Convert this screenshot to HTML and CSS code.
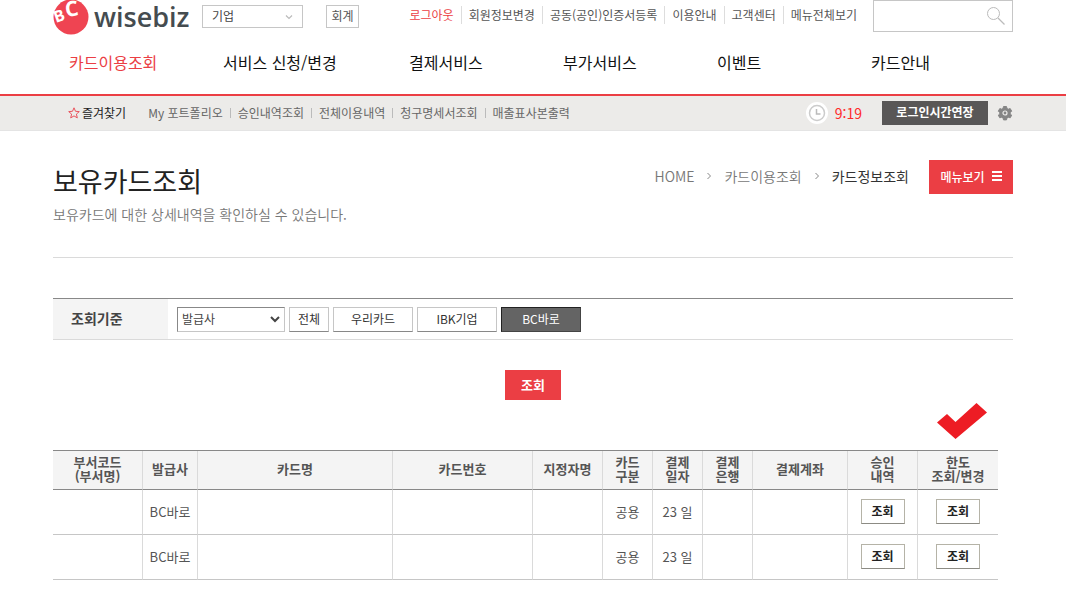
FILE: index.html
```html
<!DOCTYPE html>
<html lang="ko">
<head>
<meta charset="utf-8">
<meta name="viewport" content="width=device-width, initial-scale=1">
<title>보유카드조회 - wisebiz</title>
<link rel="stylesheet" href="styles.css">
</head>
<body>
<header class="header">
  <div class="container top">
    <a class="logo" href="#">
      <svg class="logo-mark" viewBox="0 0 36 36" aria-hidden="true">
        <circle cx="18" cy="18" r="17.500" fill="#ef4452"/>
        <text class="logo-b" transform="translate(3 24) rotate(-20)">B</text>
        <text class="logo-c" transform="translate(13 18) rotate(-8)">C</text>
      </svg>
      <span class="logo-text">wisebiz</span>
    </a>
    <div class="select-box member">
      <select class="select" aria-label="회원 구분"><option>기업</option></select>
      <svg class="arrow" viewBox="0 0 10 10" aria-hidden="true"><path d="M2 3.500l3 3l3-3" fill="none" stroke="#bbb" stroke-width="1.200"/></svg>
    </div>
    <button class="account" type="button">회계</button>
    <nav class="util" aria-label="회원 메뉴">
      <a class="on" href="#">로그아웃</a><a href="#">회원정보변경</a><a href="#">공동(공인)인증서등록</a><a href="#">이용안내</a><a href="#">고객센터</a><a href="#">메뉴전체보기</a>
    </nav>
    <form class="search">
      <input class="search-input" type="text" aria-label="검색">
      <button class="search-btn" type="button" aria-label="검색하기">
        <svg viewBox="0 0 20 20" aria-hidden="true"><circle cx="7.500" cy="7.500" r="6" fill="none" stroke="#bbb"/><path d="M12 12l6.500 6.500" stroke="#bbb" stroke-width="1.300"/></svg>
      </button>
    </form>
  </div>
  <nav class="container gnb" aria-label="주 메뉴">
    <a class="on" href="#">카드이용조회</a><a href="#">서비스 신청/변경</a><a href="#">결제서비스</a><a href="#">부가서비스</a><a href="#">이벤트</a><a href="#">카드안내</a>
  </nav>
</header>
<div class="quick">
  <div class="container quick-in">
    <a class="fav" href="#">
      <svg class="star" viewBox="0 0 12 12" aria-hidden="true"><path d="M6 .8l1.500 3.500 3.800.3-2.900 2.500.9 3.800L6 8.900l-3.300 2 .9-3.800L.7 4.600l3.800-.3z" fill="none" stroke="#e9535d"/></svg>
      즐겨찾기
    </a>
    <nav class="quick-links" aria-label="바로가기">
      <a href="#">My 포트폴리오</a><a href="#">승인내역조회</a><a href="#">전체이용내역</a><a href="#">청구명세서조회</a><a href="#">매출표사본출력</a>
    </nav>
    <div class="session">
      <svg class="clock" viewBox="0 0 22 22" aria-hidden="true"><circle cx="11" cy="11" r="11" fill="#fff"/><circle cx="11" cy="11" r="7.500" fill="none" stroke="#ccc" stroke-width="1.500"/><path d="M10.500 7v5h4" fill="none" stroke="#bbb" stroke-width="1.500"/></svg>
      <span class="time">9:19</span>
      <button class="extend" type="button">로그인시간연장</button>
      <button class="gear" type="button" aria-label="설정">
        <svg viewBox="0 0 16 16" aria-hidden="true"><path fill="#858585" stroke="#858585" stroke-linejoin="round" d="M6.500 1.500h3l.5 2 1.200.7 2-.6 1.500 2.600-1.500 1.300v1.400l1.500 1.300-1.500 2.600-2-.6-1.200.7-.5 2h-3l-.5-2-1.200-.7-2 .6-1.500-2.600 1.500-1.300V7.500L1.300 6.200l1.500-2.600 2 .6L6 3.500z"/><circle cx="8" cy="8" r="2" fill="none" stroke="#ecebe9" stroke-width="1.200"/></svg>
      </button>
    </div>
  </div>
</div>
<main class="container">
  <div class="page-head">
    <div>
      <h1 class="title">보유카드조회</h1>
      <p class="desc">보유카드에 대한 상세내역을 확인하실 수 있습니다.</p>
    </div>
    <div class="location">
      <nav class="crumbs" aria-label="현재 위치">
        <a href="#">HOME</a>
        <svg class="sep" viewBox="0 0 6 8" aria-hidden="true"><path d="M1.500 1l3 3-3 3" fill="none" stroke="#888"/></svg>
        <a href="#">카드이용조회</a>
        <svg class="sep" viewBox="0 0 6 8" aria-hidden="true"><path d="M1.500 1l3 3-3 3" fill="none" stroke="#888"/></svg>
        <span class="here">카드정보조회</span>
      </nav>
      <button class="menu-btn" type="button">메뉴보기
        <svg class="bars" viewBox="0 0 10 10" aria-hidden="true"><path d="M0 1h10M0 5h10M0 9h10" stroke="#fff" stroke-width="2"/></svg>
      </button>
    </div>
  </div>
  <form class="query">
    <div class="criteria">
      <label class="criteria-label" for="issuer">조회기준</label>
      <div class="criteria-body">
        <div class="select-box issuer">
          <select class="select" id="issuer"><option>발급사</option></select>
          <svg class="arrow" viewBox="0 0 10 10" aria-hidden="true"><path d="M1 3l4 4l4-4" fill="none" stroke="#444" stroke-width="2"/></svg>
        </div>
        <button class="chip chip-all" type="button">전체</button>
        <button class="chip" type="button">우리카드</button>
        <button class="chip" type="button">IBK기업</button>
        <button class="chip active" type="button">BC바로</button>
      </div>
    </div>
    <button class="submit" type="button">조회</button>
  </form>
  <section class="result">
    <svg class="check" viewBox="0 0 50 36" aria-hidden="true"><path d="M0 19.500L10 11l8.500 8L39.500 0 50 9.500 18.500 36z" fill="#ed1c24"/></svg>
    <table class="cards">
      <colgroup><col class="w90"><col class="w55"><col class="w195"><col class="w140"><col class="w70"><col class="w50"><col class="w50"><col class="w50"><col class="w95"><col class="w70"><col class="w80"></colgroup>
      <thead>
        <tr><th>부서코드<br>(부서명)</th><th>발급사</th><th>카드명</th><th>카드번호</th><th>지정자명</th><th>카드<br>구분</th><th>결제<br>일자</th><th>결제<br>은행</th><th>결제계좌</th><th>승인<br>내역</th><th>한도<br>조회/변경</th></tr>
      </thead>
      <tbody>
        <tr><td></td><td>BC바로</td><td></td><td></td><td></td><td>공용</td><td>23 일</td><td></td><td></td><td><button class="view" type="button">조회</button></td><td><button class="view" type="button">조회</button></td></tr>
        <tr><td></td><td>BC바로</td><td></td><td></td><td></td><td>공용</td><td>23 일</td><td></td><td></td><td><button class="view" type="button">조회</button></td><td><button class="view" type="button">조회</button></td></tr>
      </tbody>
    </table>
  </section>
</main>
</body>
</html>
```
FILE: styles.css
```css
* { box-sizing: border-box; }
body, button, input, select {
  font-family: "Noto Sans CJK KR", sans-serif;
  font-size: 12px;
}
body { margin: 0; background: #fff; color: #555; line-height: 18px; }
a { color: inherit; text-decoration: none; }
button { padding: 0 0 2px; cursor: pointer; white-space: nowrap; }
svg { display: block; flex: none; }
.container { max-width: 960px; margin: 0 auto; }

.header { border-bottom: 2px solid #eb3e44; }
.top { display: flex; align-items: flex-start; height: 36px; }
.logo { display: flex; align-items: flex-start; gap: 5px; width: 149px; color: #454c50; }
.logo-mark { width: 36px; height: 36px; margin-top: -1px; }
.logo-b, .logo-c { fill: #fff; font-family: "Open Sans", sans-serif; font-weight: 700; }
.logo-b { font-size: 16px; }
.logo-c { font-size: 21px; }
.logo-text { font: 600 27px/34px "Open Sans", sans-serif; }

.select-box { position: relative; }
.select {
  width: 100%;
  height: 100%;
  padding: 0 9px 2px;
  border: 1px solid #c6c6c6;
  border-radius: 0;
  background: #fff;
  color: #444;
  appearance: none;
}
.arrow { position: absolute; top: 50%; right: 9px; width: 10px; height: 10px; margin-top: -5px; pointer-events: none; }
.member { width: 101px; height: 23px; margin: 5px 23px 0 0; }
.account { width: 33px; height: 23px; margin-top: 5px; border: 1px solid #c6c6c6; background: #fff; color: #555; }
.util { display: flex; margin: 6px 16px 0 auto; white-space: nowrap; }
.util a { padding: 0 7px; }
.util a + a { border-left: 1px solid #ddd; }
.util a:last-child { padding-right: 0; }
.on { color: #eb3e44; }
.search { display: flex; width: 140px; height: 32px; border: 1px solid #c6c6c6; }
.search-input { flex: 1; min-width: 0; border: 0; padding: 0 8px; background: none; }
.search-btn { width: 20px; height: 20px; margin: 5px 6px 0 0; padding: 0; border: 0; background: none; }

.gnb {
  display: grid;
  grid-template-columns: 154fr 186fr 154fr 154fr 154fr 142fr;
  padding: 12px 0 18px 16px;
  color: #111;
  font-size: 16px;
  line-height: 28px;
}

.quick { border-bottom: 1px solid #e4e4e4; background: #ecebe9; }
.quick-in { display: flex; align-items: center; height: 34px; padding: 0 0 1px 15px; }
.fav { display: flex; align-items: center; gap: 2px; color: #222; }
.star { width: 12px; height: 12px; }
.quick-links { display: flex; align-items: center; margin-left: 22px; color: #666; white-space: nowrap; }
.quick-links a { display: flex; align-items: center; }
.quick-links a + a::before { content: ""; width: 1px; height: 10px; margin: 0 7px; background: #bbb; }
.session { display: flex; align-items: center; margin-left: auto; }
.clock { width: 22px; height: 22px; }
.time { margin: 0 20px 0 7px; color: #ff2a2a; font: 14px/20px "Noto Sans CJK KR", sans-serif; }
.extend { width: 106px; height: 24px; border: 0; background: #595757; color: #fff; font-weight: 700; }
.gear { width: 16px; height: 16px; margin-left: 9px; padding: 0; border: 0; background: none; }

.page-head { display: flex; justify-content: space-between; height: 127px; padding-top: 29px; border-bottom: 1px solid #dadada; }
.title { margin: 3px 0 0; color: #222; font-size: 27px; font-weight: 400; line-height: 36px; }
.desc { margin: 5px 0 0; color: #777; font-size: 14px; font-weight: 350; line-height: 20px; }
.location { display: flex; gap: 20px; }
.crumbs { display: flex; align-items: center; gap: 12px; height: 32px; color: #777; font-size: 14px; font-weight: 350; }
.sep { width: 6px; height: 8px; }
.here { color: #333; font-weight: 400; }
.menu-btn { display: flex; align-items: center; justify-content: center; gap: 7px; width: 84px; height: 34px; border: 0; background: #eb3e44; color: #fff; font-weight: 500; }
.bars { width: 10px; height: 10px; }

.query { display: flex; flex-direction: column; align-items: center; gap: 30px; margin-top: 40px; }
.criteria { display: flex; align-self: stretch; height: 42px; border-top: 1px solid #888; border-bottom: 1px solid #dadada; }
.criteria-label { display: flex; align-items: center; width: 115px; padding: 0 0 2px 18px; background: #f4f4f4; color: #444; font-size: 14px; font-weight: 700; }
.criteria-body { display: flex; align-items: center; gap: 4px; padding-left: 9px; }
.issuer { width: 108px; height: 25px; }
.issuer .select { padding: 0 4px 2px; border-color: #888 #c6c6c6 #c6c6c6 #888; }
.issuer .arrow { right: 5px; }
.chip { width: 80px; height: 25px; border: 1px solid #c6c6c6; border-bottom-color: #888; background: #fff; color: #333; }
.chip-all { width: 40px; }
.active { border-color: #222 #444 #444 #222; background: #646464; color: #fff; }
.submit { width: 56px; height: 30px; border: 0; background: #eb3e44; color: #fff; font-size: 13px; font-weight: 700; }

.result { position: relative; margin-top: 50px; padding-right: 15px; }
.check { position: absolute; top: -47px; right: 26px; width: 50px; height: 36px; }
.cards { width: 100%; table-layout: fixed; border-collapse: separate; border-spacing: 0; border-top: 1px solid #888; color: #555; font-size: 13px; text-align: center; }
.cards th, .cards td { padding: 0; border-right: 1px solid #dadada; white-space: nowrap; }
.cards th:last-child, .cards td:last-child { border-right: 0; }
.cards th { height: 39px; padding-bottom: 2px; border-bottom: 1px solid #888; background: #f4f4f4; font-weight: 700; line-height: 14px; }
.cards td { height: 45px; padding-bottom: 1px; border-bottom: 1px solid #c6c6c6; }
.view { width: 44px; height: 25px; border: 1px solid #b5b3a7; border-bottom-color: #8c8b84; background: #fff; color: #222; font-weight: 700; }
.w50 { width: 50px; }
.w55 { width: 55px; }
.w70 { width: 70px; }
.w80 { width: 80px; }
.w90 { width: 90px; }
.w95 { width: 95px; }
.w140 { width: 140px; }
.w195 { width: 195px; }
```
